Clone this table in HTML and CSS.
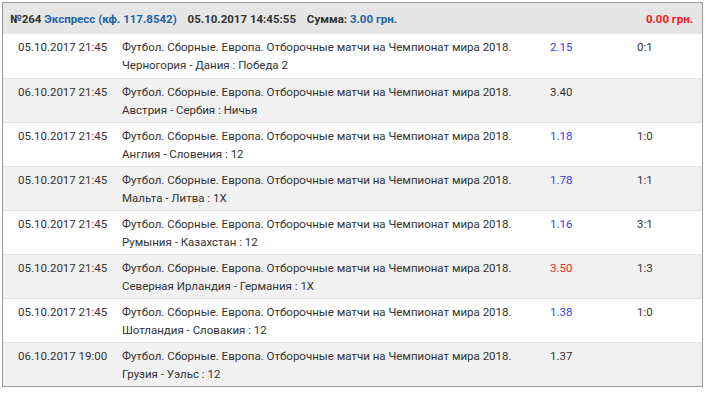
FILE: index.html
```html
<!DOCTYPE html>
<html lang="ru">
<head>
<meta charset="utf-8">
<link rel="stylesheet" href="styles.css">
</head>
<body>
<div class="bet">
  <div class="head">
    <div class="head-left">
      <span class="dark">№264</span>
      <span class="blue">Экспресс (кф. 117.8542)</span>
      <span class="dark gap">05.10.2017 14:45:55</span>
      <span class="dark gap">Сумма:</span>
      <span class="blue">3.00 грн.</span>
    </div>
    <div class="red">0.00 грн.</div>
  </div>
  <div class="row">
    <div>05.10.2017 21:45</div>
    <div>Футбол. Сборные. Европа. Отборочные матчи на Чемпионат мира 2018.<br>Черногория - Дания : Победа 2</div>
    <div class="odd win">2.15</div>
    <div>0:1</div>
  </div>
  <div class="row alt">
    <div>06.10.2017 21:45</div>
    <div>Футбол. Сборные. Европа. Отборочные матчи на Чемпионат мира 2018.<br>Австрия - Сербия : Ничья</div>
    <div class="odd">3.40</div>
    <div></div>
  </div>
  <div class="row">
    <div>05.10.2017 21:45</div>
    <div>Футбол. Сборные. Европа. Отборочные матчи на Чемпионат мира 2018.<br>Англия - Словения : 12</div>
    <div class="odd win">1.18</div>
    <div>1:0</div>
  </div>
  <div class="row alt">
    <div>05.10.2017 21:45</div>
    <div>Футбол. Сборные. Европа. Отборочные матчи на Чемпионат мира 2018.<br>Мальта - Литва : 1X</div>
    <div class="odd win">1.78</div>
    <div>1:1</div>
  </div>
  <div class="row">
    <div>05.10.2017 21:45</div>
    <div>Футбол. Сборные. Европа. Отборочные матчи на Чемпионат мира 2018.<br>Румыния - Казахстан : 12</div>
    <div class="odd win">1.16</div>
    <div>3:1</div>
  </div>
  <div class="row alt">
    <div>05.10.2017 21:45</div>
    <div>Футбол. Сборные. Европа. Отборочные матчи на Чемпионат мира 2018.<br>Северная Ирландия - Германия : 1X</div>
    <div class="odd lose">3.50</div>
    <div>1:3</div>
  </div>
  <div class="row">
    <div>05.10.2017 21:45</div>
    <div>Футбол. Сборные. Европа. Отборочные матчи на Чемпионат мира 2018.<br>Шотландия - Словакия : 12</div>
    <div class="odd win">1.38</div>
    <div>1:0</div>
  </div>
  <div class="row alt">
    <div>06.10.2017 19:00</div>
    <div>Футбол. Сборные. Европа. Отборочные матчи на Чемпионат мира 2018.<br>Грузия - Уэльс : 12</div>
    <div class="odd">1.37</div>
    <div></div>
  </div>
</div>
</body>
</html>
```
FILE: styles.css
```css
body {
  margin: 0;
  background: #fff;
  font-family: Roboto, "Liberation Sans", sans-serif;
  font-size: 11.5px;
  color: #333;
}
.bet {
  margin: 2px;
  width: 699px;
  border: 1px solid #9a9a9a;
}
.head {
  height: 31px;
  background: #e6e6e6;
  display: flex;
  align-items: center;
  justify-content: space-between;
  padding: 0 9px 0 7px;
  font-weight: bold;
}
.head-left .gap { margin-left: 8px; }
.dark { color: #333; }
.blue { color: #1f64a6; }
.red { color: #f01c1c; }
.row {
  box-sizing: border-box;
  display: grid;
  grid-template-columns: 104px 428px 87px 1fr;
  padding: 4px 0 0 15px;
  line-height: 18px;
  height: 44px;
  border-top: 1px solid #e4e4e4;
  background: #fff;
}
.head + .row { border-top: none; }
.row.alt { background: #f1f1f1; }
.odd { color: #333; }
.odd.win { color: #3c3cf0; }
.odd.lose { color: #f02828; }
```
